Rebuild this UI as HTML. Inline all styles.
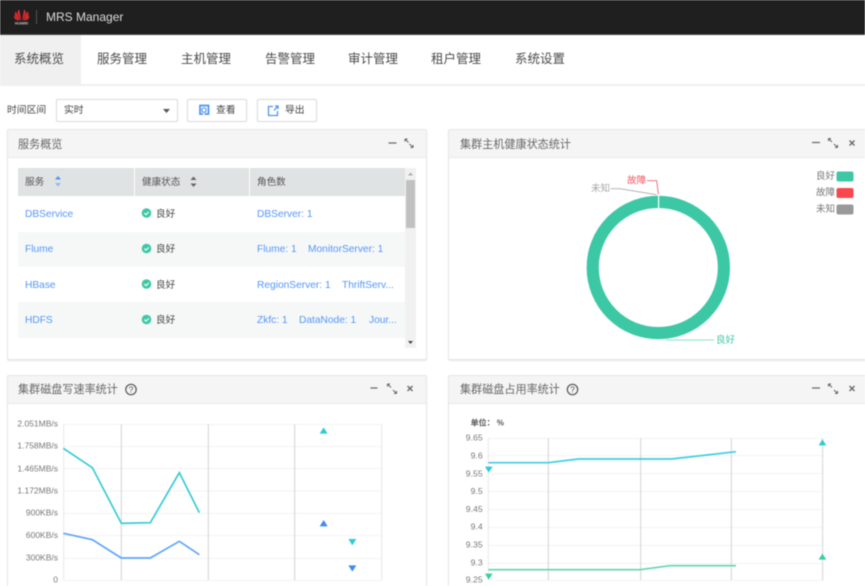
<!DOCTYPE html>
<html lang="zh">
<head>
<meta charset="utf-8">
<title>MRS Manager</title>
<style>
html,body{margin:0;padding:0;width:865px;height:586px;overflow:hidden;background:#fff}
body{font-family:"Liberation Sans","Noto Sans CJK SC",sans-serif;color:#666}
#w{position:absolute;left:0;top:0;width:865px;height:586px;overflow:hidden;filter:blur(.5px)}
.a{position:absolute;white-space:nowrap}
.top{left:0;top:0;width:865px;height:34px;background:#1f1f1f;border-bottom:1px solid #444}
.nav{left:0;top:35px;width:865px;height:49px;border-bottom:2px solid #f0f0f0}
.act{left:0;top:35px;width:81px;height:49px;background:#f0f0f0}
.tab{top:51px;font-size:12.5px;line-height:17px;color:#4a4a4a}
.btn{top:99px;height:21px;border:1px solid #dcdcdc;border-radius:2px;background:#fff;box-shadow:0 0 1px #e8e8e8}
.t10{font-size:9.8px;line-height:14px;color:#444}
.panel{background:#fff;border:1px solid #e6e6e6;border-radius:2px;box-shadow:0 1px 1px #e8e8e8;box-sizing:border-box}
.ph{background:#f5f5f5;border-bottom:1px solid #e8e8e8}
.pt{font-size:11.1px;line-height:15px;color:#666}
.th{top:168px;height:28px;background:#e0e3e3}
.thx{top:175px;font-size:9.6px;line-height:14px;color:#555;margin-top:0}
.lnk{font-size:10.2px;line-height:14px;color:#5596f8}
.ok{font-size:9.6px;line-height:14px;color:#444}
svg{position:absolute;left:0;top:0}
</style>
</head>
<body>
<div id="w">
<div class="a top"></div>
<div class="a nav"></div>
<div class="a act"></div>

<div class="a" style="left:36px;top:10px;width:1px;height:14px;background:#555"></div>
<div class="a" style="left:46px;top:10px;font-size:12px;line-height:15px;color:#dcdcdc">MRS Manager</div>

<div class="a tab" style="left:14px">系统概览</div>
<div class="a tab" style="left:97px">服务管理</div>
<div class="a tab" style="left:181px">主机管理</div>
<div class="a tab" style="left:265px">告警管理</div>
<div class="a tab" style="left:348px">审计管理</div>
<div class="a tab" style="left:431px">租户管理</div>
<div class="a tab" style="left:515px">系统设置</div>

<div class="a t10" style="left:7px;top:104px">时间区间</div>
<div class="a btn" style="left:56px;width:120px"></div>
<div class="a t10" style="left:64px;top:104px">实时</div>
<div class="a btn" style="left:187px;width:58px"></div>
<div class="a t10" style="left:216px;top:104px">查看</div>
<div class="a btn" style="left:257px;width:58px"></div>
<div class="a t10" style="left:285px;top:104px">导出</div>

<!-- panels -->
<div class="a panel" style="left:7px;top:129px;width:420px;height:231px"></div>
<div class="a ph" style="left:8px;top:130px;width:418px;height:27px"></div>
<div class="a pt" style="left:18px;top:138px">服务概览</div>

<div class="a panel" style="left:448px;top:129px;width:430px;height:231px"></div>
<div class="a ph" style="left:449px;top:130px;width:420px;height:27px"></div>
<div class="a pt" style="left:460px;top:138px">集群主机健康状态统计</div>

<div class="a panel" style="left:7px;top:375px;width:420px;height:230px"></div>
<div class="a ph" style="left:8px;top:376px;width:418px;height:27px"></div>
<div class="a pt" style="left:18px;top:383px">集群磁盘写速率统计</div>

<div class="a panel" style="left:448px;top:375px;width:430px;height:230px"></div>
<div class="a ph" style="left:449px;top:376px;width:420px;height:27px"></div>
<div class="a pt" style="left:460px;top:383px">集群磁盘占用率统计</div>

<!-- table -->
<div class="a th" style="left:18px;width:116px"></div>
<div class="a th" style="left:135px;width:114px"></div>
<div class="a th" style="left:250px;width:155px"></div>
<div class="a thx" style="left:25px;top:176px">服务</div>
<div class="a thx" style="left:142px;top:176px">健康状态</div>
<div class="a thx" style="left:257px;top:176px">角色数</div>

<div class="a" style="left:18px;top:232px;width:387px;height:35px;background:#f6f8f8"></div>
<div class="a" style="left:18px;top:302px;width:387px;height:36px;background:#f6f8f8"></div>
<div class="a" style="left:405px;top:168px;width:11px;height:180px;background:#f1f1f1"></div>
<div class="a" style="left:406px;top:180px;width:9px;height:48px;background:#c1c1c1"></div>

<div class="a lnk" style="left:25px;top:208px">DBService</div>
<div class="a lnk" style="left:25px;top:243px">Flume</div>
<div class="a lnk" style="left:25px;top:279px">HBase</div>
<div class="a lnk" style="left:25px;top:314px">HDFS</div>

<div class="a ok" style="left:156px;top:208px">良好</div>
<div class="a ok" style="left:156px;top:243px">良好</div>
<div class="a ok" style="left:156px;top:279px">良好</div>
<div class="a ok" style="left:156px;top:314px">良好</div>

<div class="a lnk" style="left:257px;top:208px">DBServer: 1</div>
<div class="a lnk" style="left:257px;top:243px">Flume: 1</div>
<div class="a lnk" style="left:308px;top:243px">MonitorServer: 1</div>
<div class="a lnk" style="left:257px;top:279px">RegionServer: 1</div>
<div class="a lnk" style="left:342px;top:279px">ThriftServ...</div>
<div class="a lnk" style="left:257px;top:314px">Zkfc: 1</div>
<div class="a lnk" style="left:299px;top:314px">DataNode: 1</div>
<div class="a lnk" style="left:369px;top:314px">Jour...</div>

<svg width="865" height="586" viewBox="0 0 865 586" font-family="Liberation Sans, Noto Sans CJK SC, sans-serif">
  <!-- huawei logo -->
  <g fill="#dd2a2e">
    <path d="M21.300 20.500 L19.300 9.500 Q16.800 11 17.800 14.500 Z"/>
    <path d="M22 20.500 L24 9.500 Q26.500 11 25.500 14.500 Z"/>
    <path d="M20.800 20.500 L15.800 11.500 Q13.800 14 15.500 16.500 Z"/>
    <path d="M22.500 20.500 L27.500 11.500 Q29.500 14 27.800 16.500 Z"/>
    <path d="M20.300 20.500 L14 15.500 Q13.800 18.800 16.500 20 Z"/>
    <path d="M23 20.500 L29.300 15.500 Q29.500 18.800 26.800 20 Z"/>
  </g>
  <text x="21.500" y="24.500" font-size="3.300" font-weight="bold" fill="#c8c8c8" text-anchor="middle">HUAWEI</text>
  <!-- select caret -->
  <path d="M163 109h7l-3.500 4z" fill="#555"/>
  <!-- view icon -->
  <g fill="none" stroke="#4f94f0" stroke-width="1.700">
    <path d="M200 110v-4.500h8.500v8.500h-4"/>
    <path d="M200 110v4h3"/>
    <circle cx="204" cy="110" r="2.200" stroke-width="1.200"/>
  </g>
  <!-- export icon -->
  <g fill="none" stroke="#4f94f0" stroke-width="1.300">
    <path d="M273 106.500h-4.500v9h9v-4.500"/>
    <path d="M274 110.500l3.500-4M275 106h3v3"/>
  </g>
  <!-- sort icons -->
  <path d="M55 179.500l3-3.500 3 3.500z" fill="#4f94f0"/>
  <path d="M55 183l3 3.500 3-3.500z" fill="#8fb9ee"/>
  <path d="M190.500 180l3-3.500 3 3.500zM190.500 183.500l3 3.500 3-3.500z" fill="#666"/>
  <!-- scroll arrows -->
  <path d="M408 175.500l2.500-3 2.500 3z" fill="#aaa"/>
  <path d="M408 341l2.500 3 2.500-3z" fill="#444"/>
  <!-- status icons -->
  <g>
    <circle cx="146.500" cy="213" r="4.800" fill="#3dc8a5"/><path d="M144.300 213l1.700 1.700 2.800-2.800" fill="none" stroke="#fff" stroke-width="1.100"/>
    <circle cx="146.500" cy="248.500" r="4.800" fill="#3dc8a5"/><path d="M144.300 248.500l1.700 1.700 2.800-2.800" fill="none" stroke="#fff" stroke-width="1.100"/>
    <circle cx="146.500" cy="284" r="4.800" fill="#3dc8a5"/><path d="M144.300 284l1.700 1.700 2.800-2.800" fill="none" stroke="#fff" stroke-width="1.100"/>
    <circle cx="146.500" cy="319.500" r="4.800" fill="#3dc8a5"/><path d="M144.300 319.500l1.700 1.700 2.800-2.800" fill="none" stroke="#fff" stroke-width="1.100"/>
  </g>
  <!-- panel tool icons -->
  <g id="tools" fill="none" stroke="#666">
    <path d="M388.500 143h8" stroke-width="1.200"/>
    <path d="M405.500 139.500l3 3M412.500 147l-3-3" stroke-width="1"/>
    <path d="M405 139h2.500M405 139v2.500M413 147.500h-2.500M413 147.500v-2.500" stroke-width="1.100"/>

    <path d="M812 142.500h8" stroke-width="1.200"/>
    <path d="M829 139l3 3M837 147l-3-3" stroke-width="1"/>
    <path d="M828.500 138.500h2.500M828.500 138.500v2.500M837.500 147.500h-2.500M837.500 147.500v-2.500" stroke-width="1.100"/>
    <path d="M849.500 140.500l5 5M854.500 140.500l-5 5" stroke-width="1.300"/>

    <path d="M370.500 388h7" stroke-width="1.200"/>
    <path d="M388 384.500l3 3M396 393l-3-3" stroke-width="1"/>
    <path d="M387.500 384h2.500M387.500 384v2.500M396.500 393.500h-2.500M396.500 393.500v-2.500" stroke-width="1.100"/>
    <path d="M407.500 386l5 5M412.500 386l-5 5" stroke-width="1.300"/>

    <path d="M812 388h8" stroke-width="1.200"/>
    <path d="M829 384.500l3 3M837 393l-3-3" stroke-width="1"/>
    <path d="M828.500 384h2.500M828.500 384v2.500M837.500 393.500h-2.500M837.500 393.500v-2.500" stroke-width="1.100"/>
    <path d="M849.500 386l5 5M854.500 386l-5 5" stroke-width="1.300"/>
  </g>
  <!-- help icons -->
  <g fill="none" stroke="#555" stroke-width="1.200">
    <circle cx="131" cy="389.500" r="5.200"/>
    <circle cx="572.500" cy="389.500" r="5.200"/>
  </g>
  <text x="131" y="392.500" font-size="8.500" fill="#555" text-anchor="middle">?</text>
  <text x="572.500" y="392.500" font-size="8.500" fill="#555" text-anchor="middle">?</text>

  <!-- donut -->
  <circle cx="658.300" cy="267.500" r="65.600" fill="none" stroke="#3dc8a5" stroke-width="12.200"/>
  <rect x="658" y="195" width="1.200" height="14" fill="#fff"/>
  <path d="M647 180.700h9.700l1.600 13.300" fill="none" stroke="#f6626a" stroke-width=".9"/>
  <path d="M610.700 188.700h9.300l36.700 6" fill="none" stroke="#aaa" stroke-width=".9"/>
  <path d="M666 340h48" fill="none" stroke="#8fe0cb" stroke-width=".9"/>
  <text x="627" y="183.500" font-size="9.500" fill="#f4555e">故障</text>
  <text x="591" y="191.500" font-size="9.500" fill="#a5a5a5">未知</text>
  <text x="716" y="343" font-size="9.500" fill="#3dc8a5">良好</text>
  <text x="816" y="179" font-size="9.500" fill="#777">良好</text>
  <text x="816" y="195.500" font-size="9.500" fill="#777">故障</text>
  <text x="816" y="212" font-size="9.500" fill="#777">未知</text>
  <rect x="836.500" y="171.500" width="17" height="10" rx="2" fill="#3dc8a5"/>
  <rect x="836.500" y="188" width="17" height="10" rx="2" fill="#f9474f"/>
  <rect x="836.500" y="204.500" width="17" height="10" rx="2" fill="#999"/>

  <!-- write rate chart -->
  <g transform="translate(0,370) scale(.33333)">
    <g stroke="#f2f2f2" stroke-width="3">
      <path d="M190 163H1146M190 230H1146M190 296H1146M190 363H1146M190 430H1146M190 497H1146M190 565H1146M190 631H1146"/>
    </g>
    <g stroke="#d8d8d8" stroke-width="3.500">
      <path d="M364 163V631M625 163V631M884 163V631"/>
    </g>
    <path d="M191 163V631M1145 163V631" stroke="#e8e8e8" stroke-width="3"/>
    <path d="M190 235L277 293L364 460L451 458L538 308L598 428" fill="none" stroke="#35cbd4" stroke-width="5"/>
    <path d="M190 490L277 509L364 564L451 564L538 514L598 554" fill="none" stroke="#5ea5f8" stroke-width="5"/>
    <path d="M959 191L971 172L983 191Z" fill="#2dcbd6"/>
    <path d="M959 469L971 450L983 469Z" fill="#3f8cee"/>
    <path d="M1045 507L1057 526L1069 507Z" fill="#2dcbd6"/>
    <path d="M1045 586L1057 605L1069 586Z" fill="#3f8cee"/>
    <g font-size="25.500" fill="#777" text-anchor="end">
      <text x="174" y="169">2.051MB/s</text>
      <text x="174" y="236">1.758MB/s</text>
      <text x="174" y="304">1.465MB/s</text>
      <text x="174" y="370">1.172MB/s</text>
      <text x="174" y="437">900KB/s</text>
      <text x="174" y="504">600KB/s</text>
      <text x="174" y="571">300KB/s</text>
      <text x="174" y="638">0</text>
    </g>
    <g font-size="27" fill="#777" text-anchor="middle">
      <text x="195" y="668">09:38:10:00</text>
      <text x="365" y="668">09:38:15:00</text>
      <text x="625" y="668">09:38:20:00</text>
      <text x="885" y="668">09:38:25:00</text>
      <text x="1145" y="668">09:38:30:00</text>
    </g>
  </g>

  <!-- usage chart -->
  <g transform="translate(435,370) scale(.33333)">
    <g stroke="#f2f2f2" stroke-width="3">
      <path d="M160 205H1163M160 257H1163M160 311H1163M160 365H1163M160 418H1163M160 472H1163M160 526H1163M160 580H1163M160 631H1163"/>
    </g>
    <g stroke="#d8d8d8" stroke-width="3.500">
      <path d="M340 205V631M617 205V631M889 205V631"/>
    </g>
    <path d="M160 205V631" stroke="#e8e8e8" stroke-width="3"/>
    <path d="M1163 205V631" stroke="#e4e4e4" stroke-width="5"/>
    <path d="M160 278L340 278L430 267L710 267L903 245" fill="none" stroke="#3ecde2" stroke-width="5"/>
    <path d="M160 599L615 599L705 587L903 587" fill="none" stroke="#62d6b2" stroke-width="5"/>
    <path d="M150 290L161 308L173 290Z" fill="#2dcbd6"/>
    <path d="M150 611L161 629L173 611Z" fill="#35cfa5"/>
    <path d="M1151 226L1162 208L1174 226Z" fill="#2dcbd6"/>
    <path d="M1151 569L1162 551L1174 569Z" fill="#35cfa5"/>
    <text x="107" y="166" font-size="24" font-weight="bold" fill="#555">单位： %</text>
    <g font-size="26" fill="#777" text-anchor="end">
      <text x="143" y="211">9.65</text>
      <text x="143" y="265">9.6</text>
      <text x="143" y="319">9.55</text>
      <text x="143" y="372">9.5</text>
      <text x="143" y="426">9.45</text>
      <text x="143" y="479">9.4</text>
      <text x="143" y="533">9.35</text>
      <text x="143" y="586">9.3</text>
      <text x="143" y="638">9.25</text>
    </g>
    <g font-size="27" fill="#777" text-anchor="middle">
      <text x="160" y="668">09:38:10:00</text>
      <text x="340" y="668">09:38:15:00</text>
      <text x="617" y="668">09:38:20:00</text>
      <text x="889" y="668">09:38:25:00</text>
      <text x="1163" y="668">09:38:30:00</text>
    </g>
  </g>
</svg>
</div>
</body>
</html>
